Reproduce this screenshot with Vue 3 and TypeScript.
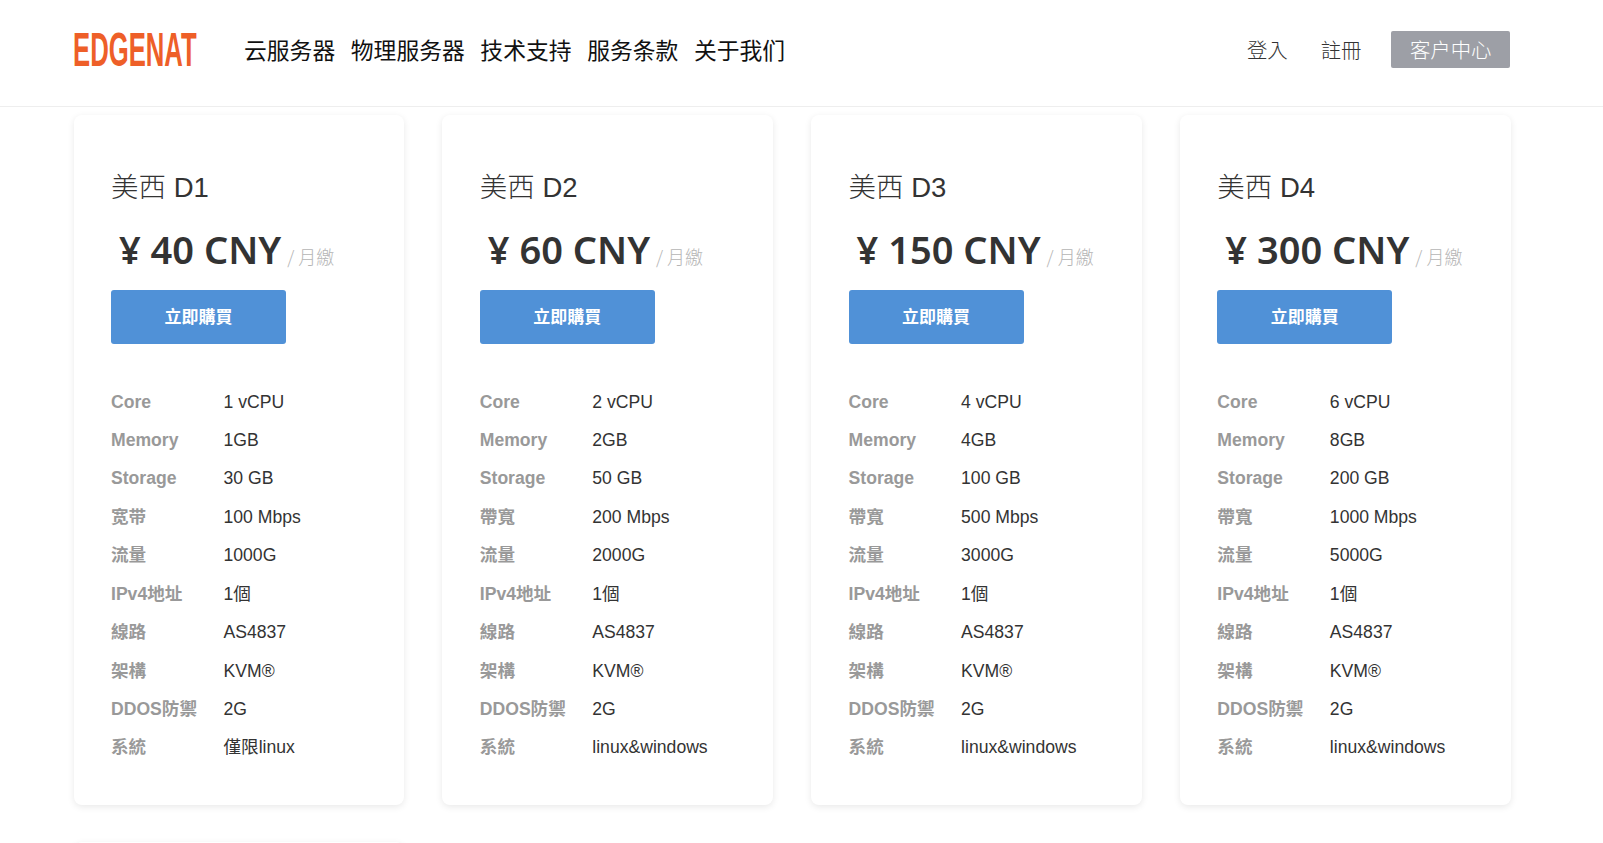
<script setup lang="ts">
interface Plan {
  name: string
  price: string
  core: string
  memory: string
  storage: string
  bandwidthLabel: string
  bandwidth: string
  traffic: string
  system: string
}

const plans: Plan[] = [
  { name: '美西 D1', price: '40', core: '1 vCPU', memory: '1GB', storage: '30 GB', bandwidthLabel: '宽带', bandwidth: '100 Mbps', traffic: '1000G', system: '僅限linux' },
  { name: '美西 D2', price: '60', core: '2 vCPU', memory: '2GB', storage: '50 GB', bandwidthLabel: '帶寬', bandwidth: '200 Mbps', traffic: '2000G', system: 'linux&windows' },
  { name: '美西 D3', price: '150', core: '4 vCPU', memory: '4GB', storage: '100 GB', bandwidthLabel: '帶寬', bandwidth: '500 Mbps', traffic: '3000G', system: 'linux&windows' },
  { name: '美西 D4', price: '300', core: '6 vCPU', memory: '8GB', storage: '200 GB', bandwidthLabel: '帶寬', bandwidth: '1000 Mbps', traffic: '5000G', system: 'linux&windows' },
]

const navItems = ['云服务器', '物理服务器', '技术支持', '服务条款', '关于我们']

function specs(p: Plan): [string, string][] {
  return [
    ['Core', p.core],
    ['Memory', p.memory],
    ['Storage', p.storage],
    [p.bandwidthLabel, p.bandwidth],
    ['流量', p.traffic],
    ['IPv4地址', '1個'],
    ['線路', 'AS4837'],
    ['架構', 'KVM®'],
    ['DDOS防禦', '2G'],
    ['系統', p.system],
  ]
}
</script>

<template>
  <div class="page">
    <header class="topbar">
      <div class="logo"><span class="logo__text">EDGENAT</span></div>
      <nav class="nav">
        <a v-for="item in navItems" :key="item" class="nav__item">{{ item }}</a>
      </nav>
      <div class="account">
        <a class="account__link">登入</a>
        <a class="account__link">註冊</a>
        <a class="account__btn">客户中心</a>
      </div>
    </header>

    <main class="plans">
      <section v-for="plan in plans" :key="plan.name" class="card">
        <h3 class="card__name">{{ plan.name }}</h3>
        <div class="card__price">
          <span class="card__amount">¥ {{ plan.price }} CNY</span>
          <span class="card__unit">/ 月繳</span>
        </div>
        <a class="card__buy">立即購買</a>
        <ul class="specs">
          <li v-for="[label, value] in specs(plan)" :key="label" class="specs__row">
            <span class="specs__label">{{ label }}</span>
            <span class="specs__value">{{ value }}</span>
          </li>
        </ul>
      </section>
      <!-- next row starts right at the fold -->
      <section class="card card--stub"></section>
    </main>
  </div>
</template>

<style>
html,
body {
  margin: 0;
  overflow: hidden;
  background: #fff;
}
</style>

<style scoped>
.page {
  height: 843px;
  overflow: hidden;
  font-family: "Liberation Sans", "Noto Sans CJK SC", sans-serif;
  color: #333;
}

.topbar {
  display: flex;
  align-items: center;
  height: 107px;
  padding: 0 93px 8px 73px;
  box-sizing: border-box;
  border-bottom: 1px solid #eee;
}

.logo {
  width: 171px;
  flex: none;
  margin-top: 2px;
}

.logo__text {
  display: block;
  font-size: 48px;
  font-weight: 700;
  line-height: 50px;
  color: #ee5f28;
  transform: scaleX(0.535);
  transform-origin: left center;
  white-space: nowrap;
}

.nav {
  display: flex;
  gap: 15.6px;
  font-family: "Noto Sans CJK SC", sans-serif;
  font-size: 22.8px;
  color: #111;
}

.account {
  display: flex;
  align-items: center;
  margin-left: auto;
  font-family: "Noto Sans CJK TC", sans-serif;
  font-size: 20.4px;
  font-weight: 300;
  color: #333;
}

.account__link {
  margin-right: 30px;
}

.account__link + .account__link {
  margin-left: 3px;
}

.account__btn {
  padding: 0 18.5px;
  height: 37px;
  margin-top: 1px;
  line-height: 36px;
  background: #9d9fa6;
  border-radius: 2px;
  color: #fff;
}

.plans {
  display: grid;
  grid-template-columns: repeat(4, 330.7px);
  column-gap: 38.1px;
  row-gap: 37px;
  padding: 8px 0 0 73.5px;
}

.card {
  box-sizing: border-box;
  height: 690px;
  padding: 53px 37.5px 0;
  background: #fff;
  border-radius: 8px;
  box-shadow: 0 2px 7px rgba(0, 0, 0, 0.09);
}

.card__name {
  margin: 0;
  font-size: 27.5px;
  font-weight: 300;
  line-height: 40px;
  color: #333;
}

.card__price {
  display: flex;
  align-items: baseline;
  margin-top: 19px;
  padding-left: 8px;
  height: 45px;
}

.card__amount {
  font-family: "Noto Sans", "Noto Sans CJK SC", sans-serif;
  font-size: 38px;
  font-weight: 600;
  line-height: 45px;
  color: #333;
}

.card__unit {
  margin-left: 6px;
  font-family: "Noto Sans CJK TC", sans-serif;
  font-size: 18px;
  font-weight: 300;
  color: #b5b5b5;
}

.card__buy {
  display: block;
  width: 175px;
  height: 54px;
  margin-top: 18px;
  background: #5091d7;
  border-radius: 3px;
  font-family: "Noto Sans CJK TC", sans-serif;
  font-size: 17px;
  font-weight: 700;
  line-height: 52px;
  text-align: center;
  color: #fff;
}

.specs {
  list-style: none;
  margin: 38.5px 0 0;
  padding: 0;
}

.specs__row {
  display: flex;
  height: 38.45px;
  align-items: baseline;
  font-size: 17.6px;
  line-height: 38.45px;
}

.specs__label {
  flex: none;
  width: 112.5px;
  font-weight: 700;
  color: #999;
  white-space: nowrap;
}

.specs__value {
  color: #333;
  white-space: nowrap;
}
</style>
